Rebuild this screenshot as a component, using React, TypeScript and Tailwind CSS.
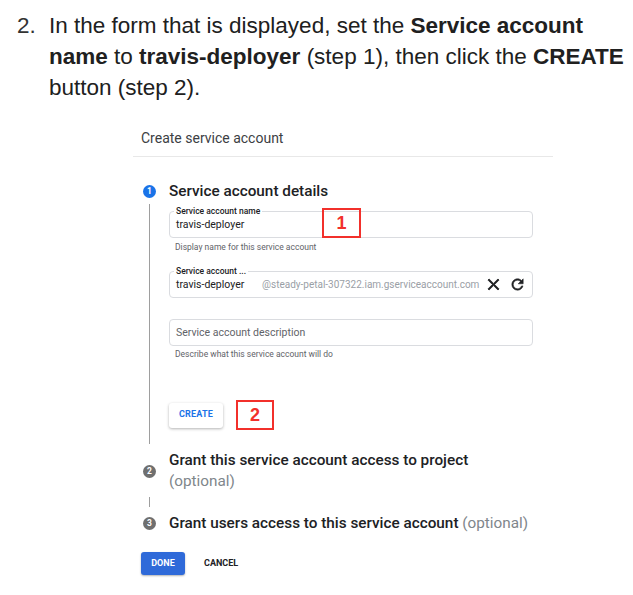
import React from "react";

const CloseIcon = () => (
  <svg width="19" height="19" viewBox="0 0 24 24" fill="#202124">
    <path d="M19 6.41L17.59 5 12 10.59 6.41 5 5 6.41 10.59 12 5 17.59 6.41 19 12 13.41 17.59 19 19 17.59 13.41 12z" stroke="#202124" strokeWidth="1" />
  </svg>
);

const RefreshIcon = () => (
  <svg width="17" height="17" viewBox="0 0 24 24" fill="#202124">
    <path d="M17.65 6.35C16.2 4.9 14.21 4 12 4c-4.42 0-7.990 3.58-7.99 8s3.57 8 7.99 8c3.73 0 6.84-2.55 7.73-6h-2.08c-.82 2.33-3.04 4-5.65 4-3.31 0-6-2.69-6-6s2.69-6 6-6c1.66 0 3.14.69 4.22 1.78L13 11h7V4l-2.35 2.35z" stroke="#202124" strokeWidth="0.8" />
  </svg>
);

const StepCircle = ({ n, active }: { n: string; active?: boolean }) => (
  <div
    className={
      "w-[13px] h-[13px] rounded-full flex items-center justify-center text-white text-[8.5px] font-bold shrink-0 " +
      (active ? "bg-[#1a73e8]" : "bg-[#6f6f6f]")
    }
  >
    {n}
  </div>
);

export default function App() {
  return (
    <div className="w-[633px] h-[595px] bg-white overflow-hidden relative">
      {/* Instruction paragraph */}
      <div className="flex pt-[10px] font-['Liberation_Sans',Arial,sans-serif] text-[22.5px] leading-[31px] text-[#202020]">
        <div className="w-[49px] pl-[17px] shrink-0 text-[#333]">2.</div>
        <div className="w-[584px] whitespace-nowrap">
          In the form that is displayed, set the <b>Service account</b>
          <br />
          <b>name</b> to <b>travis-deployer</b> (step 1), then click the <b>CREATE</b>
          <br />
          button (step 2).
        </div>
      </div>

      {/* Form screenshot */}
      <div className="ml-[133px] w-[420px] mt-[23px] font-['Roboto',Arial,sans-serif] text-[#202124]">
        <div className="pl-[8px] h-[24px] flex items-center text-[14px] text-[#3c4043]">
          Create service account
        </div>
        <div className="mt-[6px] h-[1px] bg-[#e8e8e8]" />

        <div className="pl-[10px]">
          {/* Step 1 header */}
          <div className="flex items-center gap-[13px] mt-[24px] h-[20px]">
            <StepCircle n="1" active />
            <div className="text-[15.3px] font-medium text-[#202124]">Service account details</div>
          </div>

          {/* Step 1 body */}
          <div className="flex mt-[3px]">
            <div className="w-[13px] shrink-0 flex justify-center">
              <div className="w-[1.5px] h-[240px] bg-[#9e9e9e]" />
            </div>
            <div className="ml-[13px] w-[364px]">
              {/* Input 1 */}
              <div className="relative mt-[7px] h-[27px] border border-[#dadce0] rounded-[4px] flex items-center pl-[6px]">
                <div className="absolute -top-[7px] left-[4px] bg-white px-[2px] text-[8.5px] font-medium leading-[12px] text-[#202124]">
                  Service account name
                </div>
                <div className="text-[10.5px] text-[#202124]">travis-deployer</div>
                <div className="absolute left-[152px] -top-[4px] w-[39px] h-[30px] border-[2.5px] border-[#f2302b] flex items-center justify-center text-[#f2302b] font-['Liberation_Sans',Arial,sans-serif] font-bold text-[18px]">
                  1
                </div>
              </div>
              <div className="mt-[3px] pl-[6px] text-[8.5px] leading-[12px] text-[#5f6368]">
                Display name for this service account
              </div>

              {/* Input 2 */}
              <div className="relative mt-[18px] h-[27px] border border-[#dadce0] rounded-[4px] flex items-center pl-[6px] whitespace-nowrap">
                <div className="absolute -top-[7px] left-[4px] bg-white px-[2px] text-[8.5px] font-medium leading-[12px] text-[#202124]">
                  Service account ...
                </div>
                <div className="text-[10.5px] text-[#202124] w-[86px] shrink-0">travis-deployer</div>
                <div className="text-[10px] text-[#9aa0a6] shrink-0">@steady-petal-307322.iam.gserviceaccount.com</div>
                <div className="ml-[5px] flex items-center shrink-0">
                  <CloseIcon />
                </div>
                <div className="ml-[6px] flex items-center shrink-0">
                  <RefreshIcon />
                </div>
              </div>

              {/* Input 3 */}
              <div className="relative mt-[21px] h-[27px] border border-[#dadce0] rounded-[4px] flex items-center pl-[6px]">
                <div className="text-[10.5px] text-[#5f6368]">Service account description</div>
              </div>
              <div className="mt-[2px] pl-[6px] text-[8.5px] leading-[12px] text-[#5f6368]">
                Describe what this service account will do
              </div>

              {/* Create button */}
              <div className="flex items-center mt-[40px]">
                <div className="w-[54px] h-[25px] rounded-[3px] bg-white shadow-[0_1px_3px_rgba(0,0,0,0.3)] flex items-center justify-center text-[9px] font-bold text-[#1a73e8] tracking-[0.2px]">
                  CREATE
                </div>
                <div className="ml-[13px] w-[38px] h-[30px] border-[2.5px] border-[#f2302b] flex items-center justify-center text-[#f2302b] font-['Liberation_Sans',Arial,sans-serif] font-bold text-[18px]">
                  2
                </div>
              </div>
            </div>
          </div>

          {/* Step 2 */}
          <div className="flex mt-[6px]">
            <div className="w-[13px] shrink-0 flex items-center">
              <StepCircle n="2" />
            </div>
            <div className="ml-[13px] text-[15.3px] leading-[21px] font-medium">
              <div>Grant this service account access to project</div>
              <div className="text-[#80868b] font-normal">(optional)</div>
            </div>
          </div>

          {/* Connector */}
          <div className="w-[13px] flex justify-center mt-[5px]">
            <div className="w-[1.5px] h-[10px] bg-[#9e9e9e]" />
          </div>

          {/* Step 3 */}
          <div className="flex items-center gap-[13px] mt-[6px] h-[20px]">
            <StepCircle n="3" />
            <div className="text-[15.3px] font-medium">
              Grant users access to this service account{" "}
              <span className="text-[#80868b] font-normal">(optional)</span>
            </div>
          </div>
        </div>

        {/* Done / Cancel */}
        <div className="flex items-center ml-[8px] mt-[19px]">
          <div className="w-[44px] h-[23px] rounded-[3px] bg-[#2f6ad9] shadow-[0_1px_2px_rgba(0,0,0,0.3)] flex items-center justify-center text-white text-[9px] font-bold">
            DONE
          </div>
          <div className="ml-[19px] text-[9px] font-bold text-[#202124]">CANCEL</div>
        </div>
      </div>
    </div>
  );
}
